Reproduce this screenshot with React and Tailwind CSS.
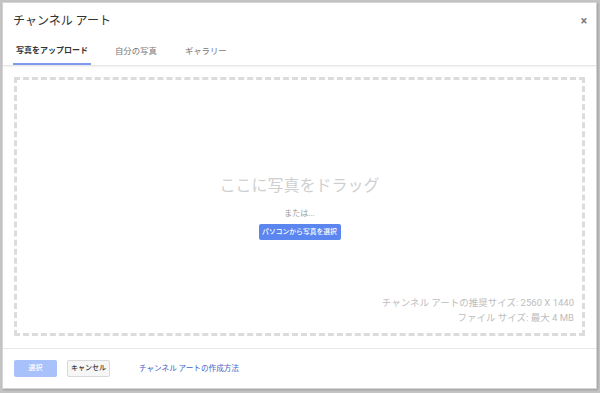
export default function App() {
  const jp = { fontFamily: "Roboto, 'Noto Sans CJK JP', sans-serif" };
  return (
    <div className="w-[600px] h-[393px] bg-[#c4c4c4] pl-[2px] pt-[2px] overflow-hidden" style={jp}>
      <div className="w-[595px] h-[387px] bg-white border border-[#d6d6d6] flex flex-col shadow-[1px_1px_2px_rgba(0,0,0,0.2)]">
        {/* Header */}
        <div className="border-b border-[#e5e5e5] shadow-[0_1px_2px_rgba(0,0,0,0.06)]">
          <div className="flex items-center justify-between h-[36px] pl-[10px] pr-[9px]">
            <h1 className="text-[12px] text-[#333] leading-none">チャンネル アート</h1>
            <span className="text-[12px] text-[#777] leading-none font-bold">×</span>
          </div>
          <div className="flex pl-[10px] h-[26px] items-start text-[8px]">
            <div className="h-full px-[3px] pt-[6px] border-b-2 border-[#7d9cf0] font-bold text-[#333]">
              写真をアップロード
            </div>
            <div className="pt-[6px] ml-[24px] text-[8.4px] text-[#777]">自分の写真</div>
            <div className="pt-[6px] ml-[28px] text-[8.4px] text-[#777]">ギャラリー</div>
          </div>
        </div>

        {/* Drop area */}
        <div className="flex-1 px-[11px] pt-[11px] pb-[12px]">
          <div className="h-full border-[3px] border-dashed border-[#dcdcdc] flex flex-col">
            <div className="flex-1 flex flex-col items-center pt-[98px]">
              <p className="text-[16px] text-[#cfcfcf] leading-none">ここに写真をドラッグ</p>
              <p className="text-[8px] text-[#9a9a9a] mt-[16px] leading-none">または...</p>
              <button className="mt-[6px] w-[82px] h-[16px] rounded-[2px] bg-[#5c86ef] text-white text-[6.8px] font-medium leading-none">
                パソコンから写真を選択
              </button>
            </div>
            <div className="text-right text-[9.5px] text-[#bdbdbd] pr-[8px] pb-[8px] leading-[15px]">
              <p>チャンネル アートの推奨サイズ: 2560 X 1440</p>
              <p>ファイル サイズ: 最大 4 MB</p>
            </div>
          </div>
        </div>

        {/* Footer */}
        <div className="border-t border-[#e8e8e8] h-[40px] flex items-center pl-[11px] text-[7px]">
          <button className="w-[43px] h-[17px] rounded-[2px] bg-[#a9c1fa] text-white font-medium leading-none">選択</button>
          <button className="ml-[10px] w-[43px] h-[17px] rounded-[2px] bg-[#f6f6f6] border border-[#d9d9d9] text-[#333] font-medium leading-none">
            キャンセル
          </button>
          <a className="ml-[29px] text-[7.6px] text-[#3e63c9]">チャンネル アートの作成方法</a>
        </div>
      </div>
    </div>
  );
}
